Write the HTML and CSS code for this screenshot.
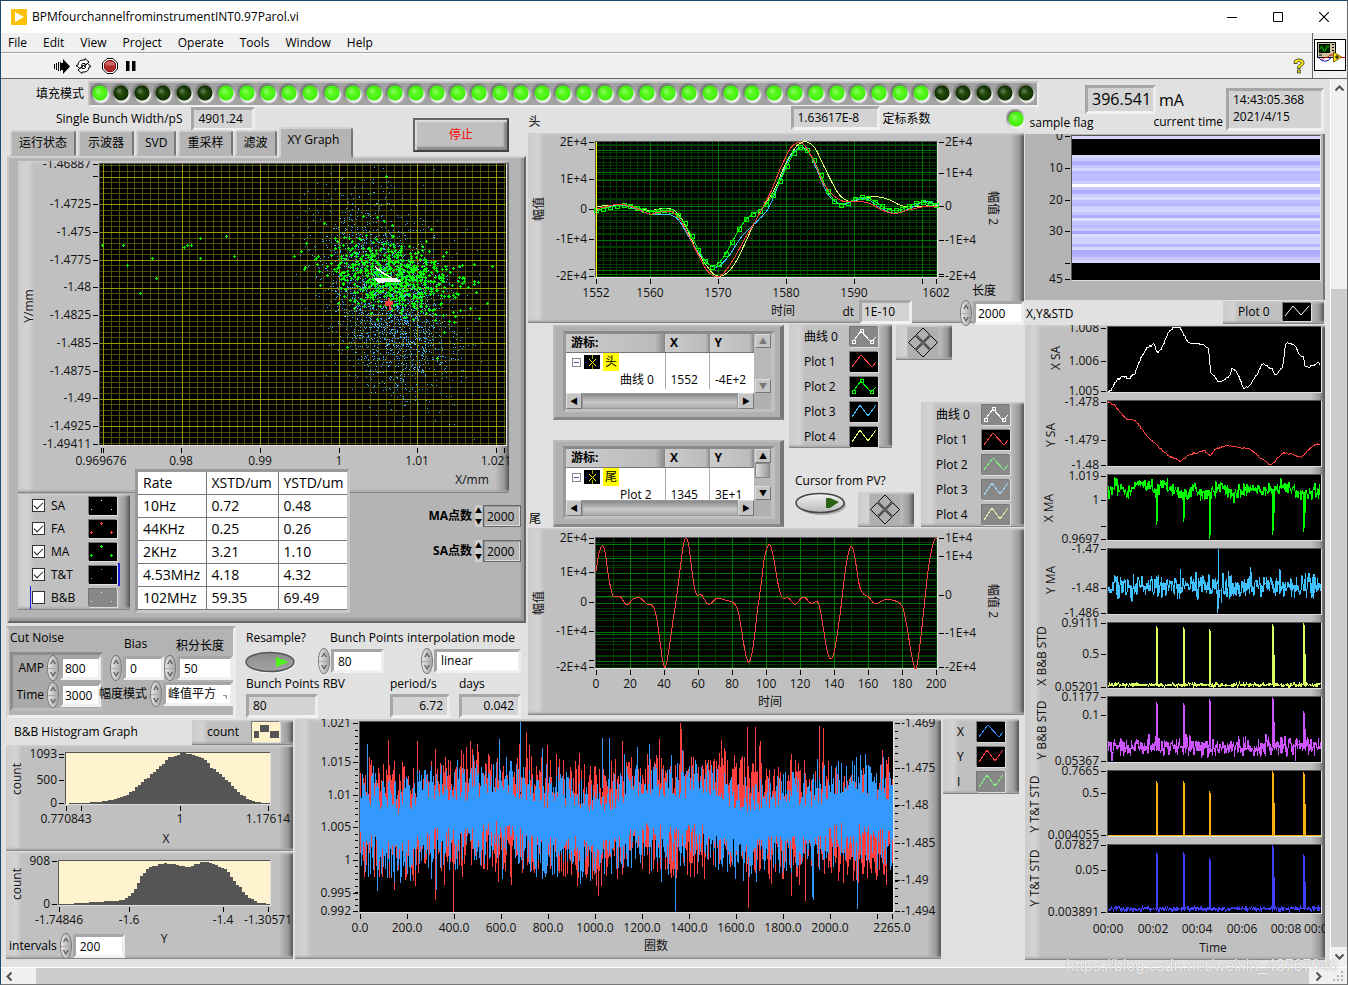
FILE: index.html
```html
<!DOCTYPE html>
<html lang="zh">
<head>
<meta charset="utf-8">
<title>BPMfourchannelfrominstrumentINT0.97Parol.vi</title>
<link rel="stylesheet" href="styles.css">
</head>
<body>
<div class="app">
  <header class="titlebar">
    <svg class="logo" width="16" height="16" viewBox="0 0 16 16"><rect width="16" height="16" rx="1" fill="#fdc10c"/><path d="M4 3l9 5-9 5z" fill="#fff"/></svg>
    <span>BPMfourchannelfrominstrumentINT0.97Parol.vi</span>
    <div class="winbtns">
      <button aria-label="Minimize"><svg width="10" height="10" viewBox="0 0 10 10"><path d="M0 5.5h10" stroke="#000"/></svg></button>
      <button aria-label="Maximize"><svg width="10" height="10" viewBox="0 0 10 10"><path d="M.5.5h9v9h-9z" fill="none" stroke="#000"/></svg></button>
      <button aria-label="Close"><svg width="10" height="10" viewBox="0 0 10 10"><path d="M0 0l10 10M10 0L0 10" stroke="#000" stroke-width="1.2"/></svg></button>
    </div>
  </header>
  <div class="bars">
    <div class="barscol">
      <nav class="menubar"><button>File</button><button>Edit</button><button>View</button><button>Project</button><button>Operate</button><button>Tools</button><button>Window</button><button>Help</button></nav>
      <div class="toolbar">
        <button aria-label="Run"><svg width="16" height="16" viewBox="0 0 16 16"><g shape-rendering="crispEdges"><path d="M0 6h1v5H0zM2 5h1v7H2zM4 4h1v9H4zM6 4h1v9H6z"/></g><path d="M7 5h2V1l7 7.500-7 7.500v-4H7z"/></svg></button>
        <button aria-label="Run continuously"><svg width="17" height="16" viewBox="0 0 17 16"><path d="M3 7c0-3 2-5 5-5h2V.5l4 3.500-4 3.500V5.500H8C7 5.500 6.500 6 6.500 7.500H8.500L5 10.500 1 7.500zM14 9c0 3-2 5-5 5H7v1.500L3 12l4-3.500v2h2c1 0 1.500-.5 1.500-2H9l3.500-3 3.500 3z" fill="#fff" stroke="#000"/></svg></button>
        <button aria-label="Abort" class="t3"><svg width="16" height="16" viewBox="0 0 16 16"><path d="M5 .5h6L15.500 5v6L11 15.500H5L.5 11V5z" fill="#fff" stroke="#000"/><path d="M5.500 2.500h5l3 3v5l-3 3h-5l-3-3v-5z" fill="#b02a2a" stroke="#7c1c1c"/><path d="M5.500 3.500h5l2 2v2h-9v-2z" fill="#d06464"/></svg></button>
        <button aria-label="Pause"><svg width="10" height="10" viewBox="0 0 10 10"><path d="M0 0h3.500v10H0zM6 0h3.500v10H6z"/></svg></button>
        <button aria-label="Help" class="help"><svg width="12" height="16" viewBox="0 0 12 16"><path d="M1 5C1 2 3 1 6 1s5 1.500 5 4c0 2-1.500 2.500-3 3.500-.8.6-.8 1-.8 2H4.500c0-2 .3-2.800 1.500-3.600C7.300 6.200 8 6 8 5c0-1-1-1.500-2-1.500S4 4 4 5.500H1zM4.500 12h2.800v3H4.500z" fill="#ffee00" stroke="#333" stroke-width=".9"/></svg></button>
      </div>
    </div>
    <div class="viicon"><svg width="32" height="32" viewBox="0 0 32 32" aria-label="VI icon"><rect x=".5" y=".5" width="31" height="31" fill="#fff" stroke="#000"/><rect x="3.500" y="3.500" width="18" height="15" fill="#c9c39c" stroke="#000"/><rect x="5.500" y="5.500" width="10" height="8" fill="#002800" stroke="#000"/><path d="M6 10q1.500-5 3 0t3 0 3-2" stroke="#00d000" fill="none"/><path d="M18 5.500h2M18 8.500h2M18 11.500h2M5 16h3" stroke="#000"/><path d="M5 18c1 5 10 6 12 0" stroke="#00a" fill="none"/><path d="M8 21c3-5 5 0 8-5h5M26 18.500h5" stroke="#e00000" fill="none"/><path d="M19.500 13l8 5-8 5z" fill="#ffe600" stroke="#806000"/><path d="M21 18h4M23 16v4" stroke="#000"/></svg></div>
  </div>
  <div class="body">
    <main class="panel-area">
      <section class="head">
        <div class="headrow">
          <span class="fill-label">填充模式</span>
          <div class="leds" id="leds"></div>
          <output class="field ro big">396.541</output><span class="ma">mA</span>
        </div>
        <div class="headrow second">
          <label for="sbw">Single Bunch Width/pS</label><output id="sbw" class="field ro w-sbw">4901.24</output>
          <span class="head-title">头</span>
          <output id="cal" class="field ro w-cal">1.63617E-8</output><label for="cal">定标系数</label>
          <i class="led on flag"></i><span class="flag-text">sample flag</span><label for="now" class="now">current time</label>
        </div>
        <output id="now" class="field ro time">14:43:05.368<br>2021/4/15</output>
      </section>
      <div class="cols">
        <div class="leftside">
          <div class="upper">
            <section class="colA">
              <div class="tabs" role="tablist">
                <button role="tab">运行状态</button><button role="tab">示波器</button><button role="tab">SVD</button><button role="tab">重采样</button><button role="tab">滤波</button><button role="tab" class="sel" aria-selected="true">XY Graph</button>
                <button class="stop">停止</button>
              </div>
              <div class="tabpage">
                <svg id="xy" class="silver" viewBox="18 161 491 332"></svg>
                <div class="below">
                  <div class="silver checks">
                    <div><label><input type="checkbox" checked>SA</label><svg class="sw" viewBox="0 0 28 18"><rect width="28" height="18"/><path d="M12 3h1v1h-1zM2 12h1v1H2zM22 12h1v1h-1z" fill="#fff"/></svg></div>
                    <div><label><input type="checkbox" checked>FA</label><svg class="sw" viewBox="0 0 28 18"><rect width="28" height="18"/><path d="M11 3h3v1h-3zM12 2h1v3h-1zM1 12h3v1H1zM2 11h1v3H2zM21 12h3v1h-3zM22 11h1v3h-1z" fill="#ff4040"/></svg></div>
                    <div><label><input type="checkbox" checked>MA</label><svg class="sw" viewBox="0 0 28 18"><rect width="28" height="18"/><path d="M11 3h3v1h-3zM12 2h1v3h-1zM1 12h3v1H1zM2 11h1v3H2zM21 12h3v1h-3zM22 11h1v3h-1z" fill="#0f0"/></svg></div>
                    <div class="tt"><label><input type="checkbox" checked>T&amp;T</label><svg class="sw" viewBox="0 0 28 18"><rect width="28" height="18"/><path d="M12 3h1v1h-1zM2 12h1v1H2zM22 12h1v1h-1z" fill="#40c0ff"/></svg></div>
                    <div class="bb"><label><input type="checkbox">B&amp;B</label><svg class="sw" viewBox="0 0 28 18"><rect width="28" height="18" fill="#888"/><path d="M12 3h1v1h-1zM2 12h1v1H2zM22 12h1v1h-1z" fill="#e8e8b0"/></svg></div>
                  </div>
                  <table class="rates">
                    <tr><th>Rate</th><th>XSTD/um</th><th>YSTD/um</th></tr>
                    <tr><td>10Hz</td><td>0.72</td><td>0.48</td></tr>
                    <tr><td>44KHz</td><td>0.25</td><td>0.26</td></tr>
                    <tr><td>2KHz</td><td>3.21</td><td>1.10</td></tr>
                    <tr><td>4.53MHz</td><td>4.18</td><td>4.32</td></tr>
                    <tr><td>102MHz</td><td>59.35</td><td>69.49</td></tr>
                  </table>
                  <div class="counts">
                    <div><label for="man">MA点数</label><span class="spin2"><button aria-label="MA up">▲</button><button aria-label="MA down">▼</button></span><input id="man" value="2000"></div>
                    <div><label for="san">SA点数</label><span class="spin2"><button aria-label="SA up">▲</button><button aria-label="SA down">▼</button></span><input id="san" value="2000"></div>
                  </div>
                </div>
              </div>
              <div class="controls">
                <div class="cluster">
                  <div class="c1">
                    <div class="c-title">Cut Noise</div>
                    <div class="recess">
                      <div class="num"><label for="amp">AMP</label><span class="spin"><button aria-label="AMP up"></button><button aria-label="AMP down"></button></span><input id="amp" class="field" value="800"></div>
                      <div class="num"><label for="tim">Time</label><span class="spin"><button aria-label="Time up"></button><button aria-label="Time down"></button></span><input id="tim" class="field" value="3000"></div>
                    </div>
                  </div>
                  <div class="c2">
                    <div class="c2row">
                      <div class="stack"><label for="bias">Bias</label><div class="num"><span class="spin"><button aria-label="Bias up"></button><button aria-label="Bias down"></button></span><input id="bias" class="field" value="0"></div></div>
                      <div class="stack"><label for="len">积分长度</label><div class="num"><span class="spin"><button aria-label="Length up"></button><button aria-label="Length down"></button></span><input id="len" class="field" value="50"></div></div>
                    </div>
                    <div class="num mode"><label for="mode">幅度模式</label><span class="spin"><button aria-label="Mode up"></button><button aria-label="Mode down"></button></span><select id="mode" class="field"><option>峰值平方</option></select></div>
                  </div>
                </div>
                <div class="resample">
                  <div class="stack r1"><span>Resample?</span><button class="toggle on" aria-label="Resample?"><svg viewBox="0 0 52 24"><use href="#toggle"/><path d="M31 7l13 5-13 5z" fill="#4cf51a"/></svg></button></div>
                  <div class="stack r2"><label for="bp">Bunch Points</label><div class="num"><span class="spin"><button aria-label="Points up"></button><button aria-label="Points down"></button></span><input id="bp" class="field" value="80"></div></div>
                  <div class="stack r3"><label for="im">interpolation mode</label><div class="num"><span class="spin"><button aria-label="Mode previous"></button><button aria-label="Mode next"></button></span><select id="im" class="field"><option>linear</option></select></div></div>
                  <div class="stack r4"><label for="rbv">Bunch Points RBV</label><output id="rbv" class="field ro">80</output></div>
                  <div class="stack r5"><label for="per">period/s</label><output id="per" class="field ro">6.72</output></div>
                  <div class="stack r6"><label for="day">days</label><output id="day" class="field ro">0.042</output></div>
                </div>
              </div>
            </section>
            <section class="colB">
              <div class="g1wrap">
                <svg id="g1" class="silver" viewBox="528 133 496 190"></svg>
                <div class="over dt"><label for="dt">dt</label><output id="dt" class="field ro">1E-10</output></div>
                <div class="over len stack"><label for="ln">长度</label><div class="num"><span class="spin"><button aria-label="Length up"></button><button aria-label="Length down"></button></span><input id="ln" class="field" value="2000"></div></div>
              </div>
              <div class="mid">
                <span class="tail">尾</span>
                <div class="cursors">
                  <div class="curbox b1">
                    <div class="curgrid">
                      <div class="clip"><table><tr><th>游标:</th><th>X</th><th>Y</th></tr><tr><td class="tree"><i class="minus"></i><i class="cur"></i><mark>头</mark></td><td></td><td></td></tr><tr><td class="leaf">曲线 0</td><td>1552</td><td>-4E+2</td></tr></table></div>
                      <div class="vs off"><button aria-label="Up">▲</button><button aria-label="Down">▼</button></div>
                      <div class="hs"><button aria-label="Left">◀</button><i></i><button aria-label="Right">▶</button></div>
                    </div>
                  </div>
                  <div class="curbox b2">
                    <div class="curgrid">
                      <div class="clip"><table><tr><th>游标:</th><th>X</th><th>Y</th></tr><tr><td class="tree"><i class="minus"></i><i class="cur"></i><mark>尾</mark></td><td></td><td></td></tr><tr><td class="leaf">Plot 2</td><td>1345</td><td>3E+1</td></tr></table></div>
                      <div class="vs"><button aria-label="Up">▲</button><i></i><button aria-label="Down">▼</button></div>
                      <div class="hs"><button aria-label="Left">◀</button><i></i><button aria-label="Right">▶</button></div>
                    </div>
                  </div>
                </div>
                <div class="legends">
                  <div class="silver legend lg1" id="lg1"></div>
                  <div class="silver nav nav1"><svg viewBox="0 0 32 32"><use href="#pan"/></svg></div>
                  <div class="pv"><span>Cursor from PV?</span><div class="pvrow"><button class="toggle" aria-label="Cursor from PV?"><svg viewBox="0 0 52 24"><use href="#togglelight"/><path d="M31 7h4l9 4-9 6h-4z" fill="#2c6414"/></svg></button><div class="silver nav"><svg viewBox="0 0 32 32"><use href="#pan"/></svg></div></div></div>
                  <div class="silver legend lg2" id="lg2"></div>
                </div>
              </div>
              <svg id="g2" class="silver" viewBox="528 528 496 187"></svg>
            </section>
          </div>
          <div class="lower">
            <section class="hist">
              <div class="histhead"><span>B&amp;B Histogram Graph</span><div class="silver count"><span>count</span><svg class="sw" viewBox="0 0 28 20"><rect width="28" height="20" fill="#fff3cc"/><path d="M2 9h5v7H2zM8 3h9v7H8zM18 9h9v7h-9z" fill="#555"/></svg></div></div>
              <svg id="hx" class="silver" viewBox="6 746 287 106"></svg>
              <svg id="hy" class="silver" viewBox="6 853 287 107"></svg>
              <div class="over num ints"><label for="int">intervals</label><span class="spin"><button aria-label="Intervals up"></button><button aria-label="Intervals down"></button></span><input id="int" class="field" value="200"></div>
            </section>
            <svg id="turns" class="silver" viewBox="295 720 646 240"></svg>
            <div class="silver legend lg3" id="lg3"></div>
          </div>
        </div>
        <section class="colC">
          <svg id="inten" class="flat" viewBox="1025 133 300 167"></svg>
          <div class="crow"><span>X,Y&amp;STD</span><div class="silver count"><span>Plot 0</span><svg class="sw" viewBox="0 0 28 18"><rect width="28" height="18"/><path d="M2 13l8-10 8 9 8-9" stroke="#fff" fill="none"/></svg></div></div>
          <svg id="strips" class="silver" viewBox="1025 325 300 635"></svg>
        </section>
      </div>
    </main>
    <div class="vscroll"><button aria-label="Scroll up"><svg width="9" height="6" viewBox="0 0 9 6"><path d="M.5 5.500l4-4 4 4" fill="none" stroke="#505050" stroke-width="2"/></svg></button><i></i><button aria-label="Scroll down"><svg width="9" height="6" viewBox="0 0 9 6"><path d="M.5.5l4 4 4-4" fill="none" stroke="#505050" stroke-width="2"/></svg></button></div>
  </div>
  <div class="hscroll"><button aria-label="Scroll left"><svg width="6" height="9" viewBox="0 0 6 9"><path d="M5.500.5l-4 4 4 4" fill="none" stroke="#505050" stroke-width="2"/></svg></button><i></i><button aria-label="Scroll right"><svg width="6" height="9" viewBox="0 0 6 9"><path d="M.5.5l4 4-4 4" fill="none" stroke="#505050" stroke-width="2"/></svg></button><svg class="grip" width="14" height="12" viewBox="0 0 14 12"><path d="M8 1h2v2H8zM4 5h2v2H4zM8 5h2v2H8zM0 9h2v2H0zM4 9h2v2H4zM8 9h2v2H8z" fill="#b0b0b0"/></svg></div>
  <div class="watermark">https://blog.csdn.net/weixin_43767046</div>
</div>
<svg width="0" height="0" class="defs"><defs>
  <linearGradient id="tg" x1="0" y1="0" x2="0" y2="1"><stop offset="0" stop-color="#8a8a8a"/><stop offset="1" stop-color="#a4a4a4"/></linearGradient>
  <linearGradient id="tl" x1="0" y1="0" x2="0" y2="1"><stop offset="0" stop-color="#f4f4f4"/><stop offset="1" stop-color="#b8b8b8"/></linearGradient>
  <g id="toggle"><ellipse cx="26" cy="12.500" rx="25" ry="11" fill="#f4f4f4"/><ellipse cx="25" cy="12" rx="24" ry="9.500" fill="url(#tg)" stroke="#555" stroke-width="1.500"/></g>
  <g id="togglelight"><ellipse cx="27" cy="14" rx="24" ry="10" fill="#a8a8a8"/><ellipse cx="25" cy="12" rx="24" ry="9.500" fill="url(#tl)" stroke="#444" stroke-width="1.500"/></g>
  <g id="pan"><rect width="32" height="32" fill="#b0b0b0"/><path d="M16 1l7 7-7 7-7-7zM16 17l7 7-7 7-7-7zM8 9l7 7-7 7-7-7zM24 9l7 7-7 7-7-7z" fill="none" stroke="#000"/></g>
</defs></svg>
<script src="panel.js"></script>
</body>
</html>
```

FILE: styles.css
```css
*{box-sizing:border-box}
body{margin:0;font:12px/16px "Open Sans","Noto Sans CJK SC",sans-serif;color:#000;background:#e1e1e1}
button,input,select{font:inherit;color:inherit;margin:0;padding:0;border:0;background:none;border-radius:0;appearance:none}
svg{display:block}
i{display:block}
.defs{position:absolute}
.app{position:relative;min-height:100vh;display:flex;flex-direction:column;border:1px solid #1d4a70;border-right-color:#666;border-bottom-color:#777;background:#e1e1e1;overflow:hidden}
.titlebar{height:32px;background:#fff;display:flex;align-items:center;padding-left:10px;gap:5px}
.winbtns{margin-left:auto;display:flex}
.winbtns button{width:46px;height:30px;display:grid;place-items:center}
.bars{display:flex;background:#f0f0f0;height:46px;border-bottom:1px solid #666}
.barscol{flex:1}
.menubar{height:20px;display:flex;gap:16px;padding-left:7px;border-bottom:1px solid #a0a0a0;align-items:center}
.menubar button{line-height:18px}
.toolbar{height:25px;display:flex;align-items:center;padding:0 7px 0 53px;gap:5px;border-top:1px solid #fff}
.toolbar .t3{margin:0 3px 0 5px}
.toolbar .help{margin-left:auto}
.viicon{width:35px;border-left:1px solid #666;padding:6px 1px}
.body{flex:1;display:flex}
.panel-area{flex:1;min-width:0;padding-bottom:7px}
.vscroll{width:17px;background:#f0f0f0;display:flex;flex-direction:column;align-items:center;border-left:1px solid #fff}
.vscroll button{height:17px}
.vscroll i{width:100%;flex:1;margin-top:193px;background:#cdcdcd}
.vscroll button:last-child{height:20px}
.hscroll{height:17px;background:#f0f0f0;display:flex;align-items:center;border-top:1px solid #fff}
.hscroll button{width:20px;display:grid;place-items:center}
.hscroll button:first-child{width:16px;margin-right:19px}
.hscroll i{flex:1;align-self:stretch;background:#cdcdcd}
.hscroll .grip{margin-left:4px}
.watermark{position:absolute;right:9px;bottom:8px;font-size:16px;line-height:20px;color:#f4f4f4;opacity:.9;text-shadow:0 0 1px #888;font-family:"Liberation Sans",sans-serif}

.silver{background:linear-gradient(180deg,#cfcfcf 0,#cfcfcf00 3px),linear-gradient(0deg,#858585 0,#858585 1px,#a8a8a8 1px,#a8a8a800 4px),linear-gradient(90deg,#cbcbcb 0,#d3d3d3 10px,#c0c0c0 16px,#c0c0c0 calc(100% - 14px),#9a9a9a calc(100% - 5px),#555 100%)}
.flat{background:#b3b3b3;border-right:2px solid #777}
.field{display:block;border:3px solid;border-color:#a6a6a6 #ededed #f1f1f1 #a6a6a6;background:#fff;padding:0 4px;line-height:18px;height:24px;min-width:0;white-space:nowrap;overflow:hidden}
.ro{background:#d3d3d3}

.head{display:grid;grid-template-columns:1fr 98px;grid-template-rows:26px 24px;padding:2px 6px 0 0}
.headrow{display:flex;align-items:center;white-space:nowrap}
.fill-label{margin-left:35px;width:52px}
.leds{display:flex;flex:0 1 951px;height:26px;border:2px solid;border-color:#c4c4c4 #ededed #f2f2f2 #c4c4c4;background:#a2a2a2}
.leds .led{flex:1}
.led{height:21px;background:radial-gradient(circle at 8px 8px,#ffffff50 0,#ffffff00 4px),radial-gradient(circle at 10px 10px,var(--a) 0,var(--b) 7px,transparent 8px),radial-gradient(circle at 11px 12px,#f0f0f0 7px,transparent 9px),radial-gradient(circle at 9px 9px,#777 7px,transparent 10px)}
.led.on{--a:#62ff26;--b:#43ee0c}
.led.off{--a:#27520b;--b:#143104}
.led.flag{width:21px;margin-left:75px}
.big{font-size:16px;width:71px;height:29px;line-height:23px;margin-left:46px;margin-top:10px}
.ma{font-size:16px;margin:12px 0 0 3px}
.second label:first-child{margin-left:55px}
.w-sbw{width:64px;margin-left:9px}
.head-title{margin:5px 0 0 273px}
.w-cal{width:89px;margin:-2px 3px 0 250px}
.flag-text{margin:8px 60px 0 3px}
.now{margin-top:6px}
.time{grid-column:2;grid-row:1/3;margin-top:7px;height:43px;line-height:17px}

.cols{display:grid;grid-template-columns:1024fr 305fr}
.upper{display:grid;grid-template-columns:526fr 498fr}
.colA{padding:0 1px 0 6px;margin-top:-4px;position:relative}
.colB{padding:2px 1px 0}
.colC{padding:3px 5px 0 0}

.tabs{display:flex;align-items:flex-end;height:29px;gap:2px;padding-left:3px}
.tabs button{height:26px;padding:0 8px;background:#b4b4b4;border:2px solid;border-color:#d0d0d0 #777 #b4b4b4 #d0d0d0;border-radius:3px 3px 0 0;white-space:nowrap}
.tabs button:nth-child(-n+5){padding:0 7px}
.tabs button:nth-child(2){padding:0 8px}
.tabs .sel{height:31px;padding:0 12px 6px 7px;margin-bottom:-2px;z-index:1}
.tabs .stop{width:96px;height:34px;margin:0 17px 4px auto;color:#f00;background:#c0c0c0;border:2px solid;border-color:#666 #444 #444 #666;border-radius:0;box-shadow:inset 2px 2px 1px #ddd,inset -3px -3px 2px #8a8a8a;padding:0}
.tabpage{background:#b4b4b4;border:2px solid;border-color:#d0d0d0 #666 #666 #c8c8c8;padding:3px 15px 8px 9px;box-shadow:inset -3px -3px 2px #999}
.below{display:flex;margin-top:1px;margin-right:-12px;align-items:flex-start}
.checks{flex:none;width:112px;height:116px;padding:0 0 1px}
.checks div{display:flex;align-items:center;height:23px;padding-left:14px}
.checks label{flex:1;display:flex;align-items:center;gap:6px}
.checks .sw{width:28px;height:18px;margin-right:13px}
.sw{box-shadow:-1px -1px #777,1px 1px #ddd}
.checks input{width:13px;height:13px;background:#fff;border:1px solid #333;display:grid;place-items:center}
.checks input:checked::before{content:"";width:8px;height:4px;border:solid #222;border-width:0 0 1px 1px;transform:translateY(-1px) rotate(-45deg)}
.checks .tt{border-right:2px solid #2020e0;margin-right:10px}
.checks .tt .sw{margin-right:1px}
.checks .bb{border-left:1px solid #2020e0;margin-left:12px;padding-left:1px}
.rates{flex:none;margin:-25px 0 0 5px;width:215px;height:144px;border:3px solid;border-color:#999 #c8c8c8 #c8c8c8 #999;border-collapse:separate;border-spacing:0;background:#777;table-layout:fixed;font-size:14px}
.rates th,.rates td{background:#fff;font-weight:400;text-align:left;padding:0 0 0 5px;border:solid #777;border-width:0 1px 1px 0;height:23px;line-height:20px;white-space:nowrap}
.rates th:nth-child(2){width:72px}
.rates th:last-child,.rates td:last-child{border-right:0}
.counts{margin-left:auto;padding-top:11px;display:grid;gap:13px}
.counts div{display:flex;align-items:center;justify-content:flex-end}
.counts label{font-weight:700;margin-right:3px}
.counts input{width:38px;height:22px;border:1px solid #666;box-shadow:inset 1px 1px #999,inset -1px -1px #ddd;padding-left:3px}
.spin2{display:grid;width:7px;height:22px;margin-right:1px;background:#ccc}
.spin2 button{font-size:7px;line-height:10px}

.controls{display:flex;margin-top:3px}
.cluster{width:230px;height:92px;margin-left:-1px;background:#b3b3b3;border:3px solid;border-color:#aaa #ededed #ededed #d0d0d0;display:flex;padding-left:1px}
.c-title{height:22px;line-height:18px}
.recess{width:93px;height:59px;background:#a9a9a9;border:3px solid;border-color:#8c8c8c #bbb #bbb #8c8c8c;margin-top:1px;display:grid;gap:1px}
.num{display:flex;align-items:center;white-space:nowrap}
.num label{padding-right:3px}
.num .field{flex:1;width:0;margin-left:1px}
.recess .num label{width:34px;text-align:right;padding-right:3px}
.recess .field{padding:0 2px;margin-right:-1px}
.spin{width:12px;height:26px;display:grid;grid-template-rows:1fr 1fr;border-radius:6px/13px;overflow:hidden;border:1px solid #777;background:#aaa;flex:none;gap:1px}
.spin button{background:linear-gradient(90deg,#e8e8e8,#a4a4a4);display:grid;place-items:center}
.spin button::before{content:"";width:6px;height:5px;background:#555;clip-path:polygon(50% 0,100% 100%,75% 100%,50% 40%,25% 100%,0 100%)}
.spin button:last-child::before{transform:scaleY(-1)}
.c2{flex:1;padding-top:7px}
.c2row{display:grid;grid-template-columns:54px 1fr;padding-left:7px}
.stack{display:flex;flex-direction:column}
.c2row label{padding-left:14px;height:19px}
.c2row .stack:last-child label{padding-left:12px;line-height:20px}
.mode{margin-left:-4px}
.mode label{padding-right:3px}
.mode select{padding:0 0 0 2px;background:#fff linear-gradient(45deg,transparent 60%,#999 60%) no-repeat right 3px bottom 3px/5px 5px}
.resample{flex:1;display:grid;grid-template-columns:72px 17px 54px 13px 1fr;grid-template-rows:45px 44px;padding:3px 5px 0 10px;align-items:end;white-space:nowrap}
.resample .stack>label{line-height:20px}
.r1{grid-area:1/1/2/2}
.r2{grid-area:1/2/2/5;width:66px}
.r2 label{margin-left:12px}
.r3{grid-area:1/4/2/6;margin-left:32px}
.r3 label{margin-left:-14px}
.r4{grid-area:2/1/3/3}
.r4 output{width:72px}
.r5{grid-area:2/4/3/6;width:60px;margin-left:1px}
.r6{grid-area:2/5/3/6;width:62px;justify-self:end}
.r5,.r6{text-align:left}
.r5 output,.r6 output{text-align:right}
.r1 .toggle{margin:4px 0 0 -1px}
.toggle svg{width:52px;height:24px}

.g1wrap{position:relative}
.over{position:absolute}
.dt{right:112px;bottom:-1px;display:flex;align-items:center;gap:5px}
.dt output{width:53px;padding:0 2px}
.over.len{right:0;bottom:-3px;width:64px}
.over.len label{padding-left:12px;line-height:18px}
.len .field{padding:0 2px}
.mid{display:grid;grid-template-columns:25px 231px 1fr;column-gap:0;margin-top:2px;height:203px}
.tail{align-self:end;padding:0 0 1px 1px}
.cursors{display:flex;flex-direction:column;justify-content:space-between;padding-bottom:1px}
.curbox{background:#b0b0b0;border:solid;border-width:2px 4px 3px 2px;border-color:#bbb #777 #888 #bbb;padding:4px 5px 5px 8px}
.b1{height:95px}
.b2{height:87px}
.curgrid{border:4px solid;border-color:#8a8a8a #c0c0c0 #c0c0c0 #999;border-width:3px 4px 3px 3px;display:grid;grid-template-columns:1fr 17px;grid-template-rows:1fr 16px;height:100%}
.clip{overflow:hidden;height:0;min-height:100%;background:#fff}
.clip table{border-collapse:collapse;table-layout:fixed;width:100%}
.clip th{height:18px;padding:0 0 0 5px;text-align:left;background:linear-gradient(90deg,#ccc,#bbb 90%,#888);border-bottom:1px solid #777}
.clip td{height:18px;padding:0 0 0 5px;line-height:18px;border-right:1px solid #aaa;white-space:nowrap}
.clip th:first-child{width:99px}
.clip td:last-child{border:0}
.clip .leaf{padding-left:54px}
.clip .tree{padding-left:6px}
.tree i{display:inline-block;vertical-align:middle;margin-right:3px}
.minus{width:9px;height:9px;border:1px solid #888;background:linear-gradient(#35a,#35a) center/5px 1px no-repeat}
.cur{width:16px;height:14px;background:linear-gradient(45deg,transparent 46%,#ff0 46% 54%,transparent 54%) center/7px 7px no-repeat,linear-gradient(-45deg,transparent 46%,#ff0 46% 54%,transparent 54%) center/7px 7px no-repeat,linear-gradient(#aa0,#aa0) 8px 0/1px 4px no-repeat,linear-gradient(#aa0,#aa0) 8px 100%/1px 4px no-repeat,#000}
.tree mark{background:#ff0;display:inline-block;padding:0 2px;line-height:18px}
.vs{background:#b8b8b8;display:flex;flex-direction:column;justify-content:space-between;padding:0 1px}
.vs button,.hs button{width:16px;height:14px;background:#c4c4c4;border:1px solid;border-color:#ddd #777 #777 #ddd;font-size:8px;line-height:10px}
.hs button{height:16px}
.vs i{flex:1;margin-bottom:8px;background:linear-gradient(90deg,#ddd,#999);border:1px solid #888}
.vs.off button{color:#777}
.hs{display:flex;background:#b8b8b8}
.hs i{flex:1;background:linear-gradient(#888,#c8c8c8 60%,#aaa);border:1px solid #999}
.legends{display:grid;grid-template-columns:103px 4px 25px 1fr;grid-template-rows:78px 45px 79px;margin-left:5px}
.legend{padding:0 14px 0 15px;font-size:12px}
.legend div{height:25px;display:flex;align-items:center;justify-content:space-between;white-space:nowrap}
.legend .sw{width:28px;height:20px}
.lg1{grid-area:1/1/3/2;margin-top:-1px}
.lg2{grid-area:2/4/4/5;margin-top:-1px}
.lg3{height:75px;padding:0 14px}
.nav{width:56px;height:35px;display:grid;place-items:center;padding-right:3px}
.nav svg{width:32px;height:31px}
.nav1{grid-area:1/3/2/5}
.pv{grid-area:3/1/4/4;align-self:end;padding-left:6px}
.pvrow{display:flex;gap:11px;margin-top:2px;align-items:center}
.pvrow .toggle{margin-bottom:12px}

.lower{display:grid;grid-template-columns:287fr 646fr 76fr;gap:2px;padding:0 6px 0 5px;margin-top:1px;align-items:start}
.hist{position:relative}
.histhead{display:flex;justify-content:space-between;align-items:center;height:26px;padding-left:8px}
.count{display:flex;align-items:center;justify-content:space-between;width:101px;height:25px;padding:0 13px 0 15px}
.count .sw{width:28px;height:20px}
#hy{margin-top:1px}
.ints{left:3px;bottom:0;width:116px}
.crow{display:flex;justify-content:space-between;align-items:center;height:25px;padding-left:1px;padding-right:1px}
.crow>span{margin-top:4px}
.crow .count{height:23px}
.crow .count .sw{height:18px}
svg text{font:12px "Open Sans","Noto Sans CJK SC",sans-serif;fill:#111}
```

FILE: panel.js
```js
let seed = 7;
const rnd = () => (seed = (seed * 16807) % 2147483647) / 2147483647;
const gauss = () => rnd() + rnd() + rnd() + rnd() + rnd() + rnd() - 3;
const put = (id, s) => { document.getElementById(id).innerHTML = s; };
const rect = (x, y, w, h, f) => `<rect x="${x}" y="${y}" width="${w}" height="${h}" fill="${f}" shape-rendering="crispEdges"/>`;
const text = (x, y, s, a = 'middle') => `<text x="${x}" y="${y + 4}" text-anchor="${a}">${s}</text>`;
const rot = (x, y, s, d = -90) => `<text transform="translate(${x} ${y}) rotate(${d})" text-anchor="middle" y="4">${s}</text>`;
const line = (pts, c, w = 1) => `<polyline points="${pts.map(p => p.join()).join(' ')}" fill="none" stroke="${c}" stroke-width="${w}" shape-rendering="crispEdges"/>`;
const plot = (x, y, w, h, f = '#000') => rect(x - 1, y - 1, w + 1, h + 1, '#555') + rect(x, y, w + 1, h + 1, '#e0e0e0') + rect(x, y, w, h, f);
const left = (x, list) => list.map(([y, s, m]) => rect(x - 7, y, m ? 4 : 5, 1, '#000') + (s ? text(x - 9, y, s, 'end') : '')).join('');
const right = (x, list) => list.map(([y, s]) => rect(x + 2, y, 5, 1, '#000') + (s ? text(x + 8, y, s, 'start') : '')).join('');
const below = (y, list, ty = 13) => list.map(([x, s, tx]) => rect(x, y + 2, 1, 5, '#000') + (s ? text(tx || x, y + ty + 3, s) : '')).join('');
const smooth = (p, n = 6) => {
  const out = [];
  for (let i = 0; i < p.length - 1; i++) {
    const a = p[Math.max(0, i - 1)], b = p[i], c = p[i + 1], d = p[Math.min(p.length - 1, i + 2)];
    for (let k = 0; k < n; k++) {
      const t = k / n, m1 = (c[1] - a[1]) / (c[0] - a[0] || 1), m2 = (d[1] - b[1]) / (d[0] - b[0] || 1), h = c[0] - b[0];
      const y = (2 * t ** 3 - 3 * t * t + 1) * b[1] + (t ** 3 - 2 * t * t + t) * m1 * h + (3 * t * t - 2 * t ** 3) * c[1] + (t ** 3 - t * t) * m2 * h;
      out.push([(b[0] + t * h).toFixed(1), y.toFixed(1)]);
    }
  }
  out.push(p[p.length - 1]);
  return out;
};
const third = (ox, oy, flat) => { const r = []; for (let i = 0; i < flat.length; i += 2) r.push([ox + flat[i] / 3, oy + flat[i + 1] / 3]); return r; };
const at = (pts, x) => { for (let i = 1; i < pts.length; i++) if (x <= pts[i][0]) { const a = pts[i - 1], b = pts[i]; return a[1] + (b[1] - a[1]) * (x - a[0]) / (b[0] - a[0]); } return pts[pts.length - 1][1]; };

/* fill pattern: one lamp per bucket */
put('leds', Array.from({ length: 45 }, (_, i) => `<i class="led ${i === 0 || (i > 5 && i < 40) ? 'on' : 'off'}"></i>`).join(''));

/* legends */
const peak = 'M2 15l9-12 11 12 4-5', zig = 'M2 15l8-12 8 11 8-11';
const marks = 'M2 13h3v3H2zM10 2h3v3h-3zM20 13h3v3h-3z';
const sw = (bg, c, d) => `<svg class="sw" viewBox="0 0 28 20"><rect width="28" height="20" fill="${bg}"/><path d="${d}" fill="none" stroke="${c}" shape-rendering="crispEdges"/></svg>`;
const legend = (id, rows) => put(id, rows.map(r => `<div><span>${r[0]}</span>${sw(r[1], r[2], r[3])}</div>`).join(''));
const marked = 'M4 13l7-9 10 11 5-5' + marks;
legend('lg1', [['曲线 0', '#888', '#fff', marked], ['Plot 1', '#000', '#ff4040', peak], ['Plot 2', '#000', '#0f0', marked], ['Plot 3', '#000', '#40c0ff', zig], ['Plot 4', '#000', '#e0ff70', zig]]);
legend('lg2', [['曲线 0', '#888', '#fff', marked], ['Plot 1', '#000', '#ff4040', peak], ['Plot 2', '#888', '#80f080', peak], ['Plot 3', '#888', '#a0d8f8', zig], ['Plot 4', '#888', '#e8f0a8', zig]]);
legend('lg3', [['X', '#000', '#3090ff', peak], ['Y', '#000', '#ff4040', zig], ['I', '#888', '#80f080', zig]]);

/* XY scatter */
{
  let s = plot(100, 164, 406, 281);
  for (let i = -1; i < 52; i++) { const x = Math.round(103 + i * 7.86); if (x > 99 && x < 506) s += rect(x, 164, 1, 281, '#505000'); }
  for (let i = -2; i < 49; i++) { const y = Math.round(176.5 + i * 5.55); if (y > 163 && y < 445) s += rect(100, y, 406, 1, '#505000'); }
  for (let i = 0; i < 6; i++) s += rect(Math.round(103 + i * 78.6), 164, 1, 281, '#989800');
  for (let i = 0; i < 10; i++) s += rect(100, Math.round(176.5 + i * 27.75), 406, 1, '#989800');
  const dot = [], plus = [];
  for (let i = 0; i < 2500; i++) {
    const x = Math.round(389 + gauss() * 46), y = Math.round(300 + (x - 389) * .6 + gauss() * 62);
    if (x > 101 && x < 505 && y > 166 && y < 444) dot.push(`M${x} ${y}h1v1h-1z`);
  }
  const addPlus = (x, y) => { if (x < 504) plus.push(`M${x - 1} ${y}h3v1h-3zM${x} ${y - 1}h1v3h-1z`); };
  for (let i = 0; i < 620; i++) { const x = Math.round(394 + gauss() * 46); addPlus(x, Math.round(278 + (x - 394) * .15 + gauss() * 25)); }
  [[102, 245], [123, 245], [184, 247], [187, 245], [191, 245], [200, 238], [226, 236], [152, 258], [200, 258], [234, 256], [127, 265], [156, 278], [140, 293], [294, 256], [386, 176], [324, 223], [487, 303], [437, 358], [347, 347]].forEach(p => addPlus(...p));
  s += `<g shape-rendering="crispEdges"><path d="${dot.join('')}" fill="#40b0f0"/><path d="${plus.join('')}" fill="#0f0"/><path d="M375 267l8 6 9 5M376 279h20l3 2-20 1z" stroke="#fff" stroke-width="1.500" fill="#fff"/><path d="M385 301h3v-3h2v3h3v4h-2v3h1v2h-3v-4h-4z" fill="#ff4040"/></g>`;
  s += left(100, [[164, '-1.46887'], [176, ''], [204, '-1.4725'], [232, '-1.475'], [260, '-1.4775'], [287, '-1.48'], [315, '-1.4825'], [343, '-1.485'], [371, '-1.4875'], [398, '-1.49'], [426, '-1.4925'], [444, '-1.49411']]);
  s += below(446, [[101, '0.969676'], [103, ''], [181, '0.98'], [260, '0.99'], [339, '1'], [417, '1.01'], [496, '1.021'], [504, '']], 12);
  s += rot(29, 306, 'Y/mm') + text(472, 480, 'X/mm');
  put('xy', s);
}

/* green double-scale grid */
const grid = (x, y, w, h, xs, xmaj, la, ls, ra, rs) => {
  let s = plot(x, y, w, h);
  const inY = v => v > y && v < y + h;
  for (const [a, st] of [[la, ls], [ra, rs]]) for (let i = -12; i < 13; i++) { const v = Math.round(a + i * st / 5); if (inY(v)) s += rect(x, v, w, 1, '#003c00'); }
  for (let i = 0; xs.o + i * xs.s < x + w; i++) { const v = Math.round(xs.o + i * xs.s); if (v > x) s += rect(v, y, 1, h, '#003c00'); }
  xmaj.forEach(v => { s += rect(Math.round(v), y, 1, h, '#007800'); });
  for (const [a, st] of [[la, ls], [ra, rs]]) for (let i = -2; i < 3; i++) { const v = Math.round(a + i * st); if (inY(v)) s += rect(x, v, w, 1, '#007800'); }
  return s;
};

{
  let s = grid(596, 142, 341, 135, { o: 596, s: 6.8 }, [650, 718, 786, 854, 922], 209.5, 30, 206, 34);
  const T = f => third(525, 105, f);
  s += line(smooth(T([214, 304, 290, 300, 330, 308, 375, 316, 420, 310, 450, 318, 475, 350, 510, 425, 540, 475, 570, 510, 600, 508, 630, 475, 660, 415, 690, 350, 720, 298, 750, 250, 780, 180, 800, 145, 820, 118, 845, 111, 870, 130, 900, 190, 940, 265, 975, 290, 1010, 282, 1050, 275, 1090, 283, 1130, 302, 1170, 305, 1236, 300])), '#e0ff70');
  s += line(smooth(T([214, 316, 290, 300, 340, 315, 380, 328, 430, 328, 460, 345, 500, 410, 530, 455, 560, 483, 580, 484, 610, 455, 650, 395, 700, 345, 730, 310, 760, 240, 790, 165, 820, 130, 850, 140, 880, 205, 910, 270, 950, 298, 1000, 283, 1030, 284, 1060, 305, 1110, 325, 1150, 312, 1200, 290, 1236, 300])), '#40c0ff');
  const g = [314, 311, 307, 302, 299, 302, 308, 316, 320, 319, 316, 318, 331, 355, 394, 434, 469, 485, 476, 448, 410, 373, 343, 328, 317, 298, 270, 229, 184, 145, 127, 136, 166, 211, 257, 287, 299, 293, 282, 277, 280, 290, 304, 314, 316, 313, 304, 295, 292, 295, 300].map((y, k) => [596.3 + 6.8 * k, 105 + y / 3]);
  s += line(g, '#0f0');
  g.forEach(([x, y]) => { s += `<rect x="${Math.round(x) - 1.5}" y="${Math.round(y) - 1.5}" width="4" height="4" fill="none" stroke="#0f0" shape-rendering="crispEdges"/>`; });
  s += line(smooth(T([214, 312, 280, 298, 320, 305, 375, 327, 400, 322, 440, 320, 462, 340, 480, 370, 520, 450, 545, 495, 565, 512, 580, 515, 600, 500, 630, 455, 660, 400, 690, 350, 720, 295, 740, 255, 760, 205, 785, 150, 800, 125, 825, 113, 845, 130, 870, 175, 895, 235, 930, 275, 960, 290, 1000, 288, 1040, 298, 1070, 315, 1110, 325, 1150, 315, 1200, 305, 1236, 306])), '#ff4040');
  s += rect(596, 142, 1, 135, '#ff0');
  s += left(596, [[142, '2E+4'], [149, ''], [179, '1E+4'], [209, '0'], [239, '-1E+4'], [269, ''], [276, '-2E+4']]);
  s += right(937, [[142, '2E+4'], [173, '1E+4'], [206, '0'], [240, '-1E+4'], [274, ''], [276, '-2E+4']]);
  s += below(277, [[596, '1552'], [650, '1560'], [718, '1570'], [786, '1580'], [854, '1590'], [922, ''], [936, '1602']]);
  s += rot(539, 209, '幅值') + rot(993, 208, '幅值 2', 90) + text(783, 311, '时间');
  put('g1', s);
}

{
  let s = grid(596, 538, 341, 130, { o: 596, s: 17 }, [630, 664, 698, 732, 766, 800, 834, 868, 902], 602.5, 29.3, 595.5, 38);
  s += line(smooth(third(525, 525, [213, 138, 222, 85, 232, 62, 240, 80, 250, 150, 262, 208, 272, 216, 285, 214, 305, 240, 325, 222, 345, 219, 365, 236, 385, 245, 395, 280, 405, 350, 412, 400, 420, 428, 430, 385, 445, 280, 455, 215, 468, 110, 477, 50, 484, 40, 491, 60, 500, 130, 510, 195, 518, 212, 528, 208, 550, 238, 575, 220, 600, 225, 630, 238, 642, 270, 655, 350, 665, 400, 674, 409, 685, 360, 697, 260, 708, 180, 718, 100, 728, 64, 736, 62, 745, 95, 760, 180, 772, 218, 790, 219, 810, 238, 835, 216, 858, 235, 880, 234, 892, 290, 903, 360, 912, 395, 920, 400, 930, 370, 945, 270, 958, 160, 970, 85, 980, 64, 990, 100, 1003, 180, 1015, 206, 1030, 215, 1050, 236, 1080, 224, 1105, 226, 1132, 245, 1145, 300, 1158, 380, 1168, 426, 1175, 425, 1187, 340, 1200, 220, 1210, 130, 1222, 65, 1230, 42, 1236, 42])), '#ff4040');
  s += left(596, [[538, '2E+4'], [543, ''], [572, '1E+4'], [602, '0'], [631, '-1E+4'], [660, ''], [667, '-2E+4']]);
  s += right(937, [[538, '1E+4'], [556, '1E+4'], [595, '0'], [633, '-1E+4'], [667, '-2E+4']]);
  s += below(668, Array.from({ length: 11 }, (_, i) => [596 + i * 34, String(i * 20)]));
  s += rot(539, 603, '幅值') + rot(993, 601, '幅值 2', 90) + text(770, 702, '时间');
  put('g2', s);
}

/* turn-by-turn positions */
{
  let s = plot(360, 723, 533, 190), r = '', b = '';
  const top = (base, reach, p) => base - rnd() ** 1.3 * reach - (rnd() > p ? 12 + rnd() * 16 : 0);
  const low = (base, reach, p) => base + rnd() ** 1.3 * reach + (rnd() > p ? 12 + rnd() * 16 : 0);
  for (let x = 360; x < 893; x++) {
    const m = Math.sin(x / 14) * 5 + Math.sin(x / 37 + 1) * 5;
    const n = Math.sin((x - 360) / 30 - 2.6) * 8 + Math.sin(x / 11) * 4;
    const rt = Math.max(724, top(799 - m, 42, .9)), rb = Math.min(912, low(838 - m, 40, .92));
    const bt = Math.max(724, top(804 - n, 36, .95)), bb = Math.min(912, low(832 - n, 42, .95));
    r += `M${x} ${rt.toFixed()}h1V${rb.toFixed()}h-1z`;
    b += `M${x} ${bt.toFixed()}h1V${bb.toFixed()}h-1z`;
  }
  r += 'M417 742h1v60h-1zM453 840h1v73h-1zM519 745h1v60h-1zM680 724h1v70h-1zM681 730h1v70h-1zM747 728h1v70h-1zM755 728h1v70h-1zM819 727h1v70h-1zM823 729h1v70h-1zM748 840h1v69h-1z';
  b += 'M520 723h1v70h-1zM499 740h1v50h-1zM602 739h1v50h-1zM609 739h1v50h-1zM675 840h1v72h-1zM857 840h1v70h-1zM812 840h1v58h-1zM367 745h1v50h-1z';
  s += `<g shape-rendering="crispEdges"><path d="${r}" fill="#ff4040"/><path d="${b}" fill="#3399ff"/></g>`;
  for (let y = 724; y < 912; y += 6.5) s += rect(355, Math.round(y), 3, 1, '#000');
  for (let y = 724; y < 912; y += 7.5) s += rect(895, Math.round(y), 3, 1, '#000');
  s += left(360, [[724, '1.021'], [763, '1.015'], [796, '1.01'], [828, '1.005'], [861, '1'], [894, '0.995'], [912, '0.992']]);
  s += right(893, [[724, '-1.469'], [769, '-1.475'], [806, '-1.48'], [844, '-1.485'], [881, '-1.49'], [912, '-1.494']]);
  s += below(913, [...Array.from({ length: 11 }, (_, i) => [360 + i * 47, (i * 200) + '.0']), [877, ''], [892, '2265.0']]);
  s += text(656, 947, '圈数');
  put('turns', s);
}

/* histograms */
const histogram = (id, x0, x1, y0, y1, pts, rest) => {
  let s = plot(x0, y0, x1 - x0, y1 - y0, '#fff3cf');
  for (let x = x0; x < x1; x += 3) { const y = Math.max(y0, Math.round(at(pts, x + 1) + (rnd() - .5) * Math.min(2, (y1 - at(pts, x)) / 6))); s += rect(x, y, Math.min(3, x1 - x), y1 - y, '#555'); }
  put(id, s + rest);
};
histogram('hx', 66, 270, 754, 805, third(0, 710, [197, 284, 245, 282, 300, 278, 350, 270, 390, 252, 430, 215, 470, 180, 510, 145, 545, 132, 580, 138, 610, 150, 640, 180, 680, 215, 710, 248, 740, 268, 770, 280, 812, 284]),
  left(66, [[755, '1093'], [758, ''], [781, '500'], [804, '0']]) + below(805, [[66, '0.770843'], [81, ''], [180, '1'], [268, '1.17614']], 12) + rot(17, 780, 'count') + text(166, 840, 'X'));
histogram('hy', 59, 270, 862, 906, third(0, 710, [177, 586, 230, 583, 300, 578, 370, 574, 400, 550, 420, 505, 450, 475, 495, 460, 530, 468, 570, 475, 600, 458, 640, 463, 680, 485, 710, 525, 740, 560, 770, 580, 812, 586]),
  left(59, [[862, '908'], [905, '0']]) + below(906, [[59, '-1.74846'], [129, '-1.6'], [223, '-1.4'], [268, '-1.30571']], 12) + rot(17, 885, 'count') + text(164, 940, 'Y'));

/* bunch intensity map */
{
  let s = plot(1072, 135, 250, 145);
  const shades = 'd8 cc ae c4 d8 b8 c0 bb cc ff c8 b0 cc dc c0 b4 d0 d6 c8 ac e0 c4 b8 cc a6 dc ce d2 b4 d8 ac b2 c8 d4'.split(' ');
  s += rect(1072, 135, 250, 3, '#d8d8ff');
  shades.forEach((c, i) => { const a = Math.round(154 + i * 3.21), b = Math.round(154 + (i + 1) * 3.21); s += rect(1072, a, 250, b - a, `#${c}${c}ff`); });
  s += left(1072, [[135, '0'], [167, '10'], [199, '20'], [231, '30'], [263, ''], [279, '45']]);
  put('inten', s);
}

/* strip charts */
{
  let s = '';
  const X0 = 1108, W = 213, tops = [327, 401, 475, 549, 623, 697, 771, 845];
  tops.forEach((y, i) => { s += plot(X0, y, W, i === 7 ? 68 : 65); });
  const Z = f => third(1020, 295, f);
  const wobble = p => { const o = []; for (let x = X0; x < X0 + W; x++) o.push([x, (at(p, x) + (rnd() - .5) * 1.6).toFixed(1)]); return o; };
  s += line(wobble(Z([263, 290, 272, 288, 290, 255, 310, 243, 328, 251, 345, 235, 362, 190, 380, 160, 403, 146, 412, 175, 425, 160, 445, 112, 460, 98, 480, 98, 505, 143, 550, 150, 565, 160, 572, 230, 597, 261, 628, 245, 636, 218, 650, 230, 672, 283, 690, 270, 710, 240, 728, 206, 757, 222, 766, 243, 788, 215, 797, 145, 822, 148, 840, 180, 850, 185, 856, 218, 880, 212, 895, 203, 903, 211])), '#fff');
  s += line(wobble(Z([263, 320, 285, 332, 305, 358, 325, 375, 345, 375, 375, 415, 410, 450, 440, 478, 480, 498, 510, 478, 555, 467, 570, 483, 585, 462, 620, 452, 690, 462, 720, 488, 752, 511, 790, 472, 845, 487, 870, 460, 890, 447, 903, 450])), '#ff4040');
  const spikes = [1157, 1184, 1210, 1273, 1304];
  const noise = (base, amp, color, up, tips) => {
    const o = [];
    for (let x = X0; x < X0 + W; x += .5) o.push([x, (base(x) + gauss() * amp).toFixed(1)]);
    let r = line(o, color);
    tips.forEach((t, i) => { const b = base(spikes[i]); r += rect(spikes[i] - 1, Math.min(t, b), 1, Math.abs(b - t), color) + rect(spikes[i], Math.min(t + up * 2, b), 1, Math.abs(b - t - up * 2), color) + (i > 2 ? rect(spikes[i] + 1, Math.min(b, (b + t) / 2), 1, Math.abs(b - t) / 2, color) : ''); });
    return r;
  };
  const maX = Z([263, 597, 290, 570, 320, 605, 350, 565, 385, 572, 410, 590, 435, 565, 470, 590, 500, 605, 520, 575, 550, 605, 585, 585, 610, 575, 640, 600, 690, 580, 740, 590, 800, 575, 850, 600, 903, 590]);
  s += noise(x => at(maX, x), 5, '#0f0', -2, [525, 522, 539, 535, 532]);
  s += noise(() => 586, 9, '#40c0ff', 0, []) + rect(1218, 549, 1, 60, '#40c0ff') + rect(1217, 590, 1, 23, '#40c0ff');
  s += noise(() => 685, 1.5, '#d8ff60', 1, [626, 627, 629, 624, 623]);
  s += noise(() => 747, 7, '#cc55ff', 1, [702, 703, 699, 697, 711]);
  s += line([[X0, 835.5], [X0 + W, 835.5]], '#ffb010') + noise(() => 835, 0, '#ffb010', 1, [781, 781, 791, 771, 772]);
  s += noise(() => 909, 1.8, '#4040ff', 1, [852, 852, 858, 845, 854]);
  s += left(1108, [[328, '1.008'], [361, '1.006'], [391, '1.005'], [402, '-1.478'], [440, '-1.479'], [465, '-1.48'], [476, '1.019'], [500, '1'], [526, ''], [539, '0.9697'], [549, '-1.47'], [588, '-1.48'], [613, '-1.486'], [623, '0.9111'], [654, '0.5'], [687, '0.05201'], [697, '0.1177'], [715, '0.1'], [761, '0.05367'], [771, '0.7665'], [793, '0.5'], [835, '0.004055'], [845, '0.07827'], [870, '0.05'], [912, '0.003891']]);
  [[1056, 358, 'X SA'], [1051, 435, 'Y SA'], [1049, 508, 'X MA'], [1051, 580, 'Y MA'], [1042, 656, 'X B&amp;B STD'], [1042, 730, 'Y B&amp;B STD'], [1035, 804, 'Y T&amp;T STD'], [1035, 878, 'Y T&amp;T STD']].forEach(t => { s += rot(...t); });
  [[1108, '00:00'], [1153, '00:02'], [1197, '00:04'], [1242, '00:06'], [1286, '00:08']].forEach(([x, t]) => { s += text(x, 929, t); });
  s += text(1304, 929, '00:09', 'start') + text(1213, 948, 'Time');
  put('strips', s);
}
```
